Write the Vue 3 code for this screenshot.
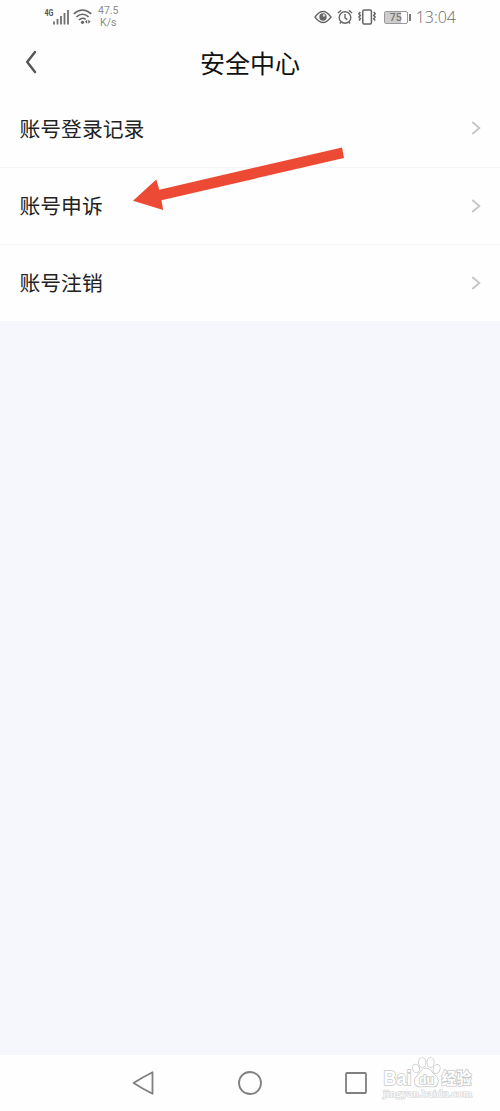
<script setup>
import { ref } from "vue"

const items = ref(["账号登录记录", "账号申诉", "账号注销"])
const battery = ref(75)
</script>

<template>
  <div class="screen">
    <div class="status">
      <svg class="signal" width="27" height="18" viewBox="0 0 27 18">
        <text x="0.5" y="8" class="net" textLength="9" lengthAdjust="spacingAndGlyphs">4G</text>
        <path d="M10 13.5v3M13.5 11v5.500M17 8v8.500M20.500 5v11.500M24 2v14.500" stroke="#707070" stroke-width="1.800" />
      </svg>
      <svg class="wifi" width="20" height="18" viewBox="0 0 20 18">
        <g fill="none" stroke="#666" stroke-width="1.600">
          <path d="M0.800 5.800Q9.500-1.800 18.200 5.800" />
          <path d="M3.400 8.900Q9.500 3.600 15.600 8.900" />
          <path d="M5.900 12Q9.500 8.800 12.700 11.300" />
        </g>
        <circle cx="9.500" cy="14.300" r="1.600" fill="#666" />
        <path d="M14.200 11.800v4l-2.300-2zM15.300 11.800v4l2.300-2z" fill="#666" />
      </svg>
      <div class="speed">
        <span>47.5</span>
        <span>K/s</span>
      </div>
      <div class="status-right">
        <svg class="eye" width="18" height="14" viewBox="0 0 18 14">
          <path d="M1 7Q9-4 17 7Q9 18 1 7z" fill="none" stroke="#666" stroke-width="1.300" />
          <circle cx="9" cy="7" r="3.700" fill="#666" />
          <circle cx="10" cy="5.500" r="1.200" fill="#ddd" />
        </svg>
        <svg class="alarm" width="16" height="16" viewBox="0 0 16 16">
          <g fill="none" stroke="#666" stroke-width="1.400">
            <circle cx="8" cy="8.500" r="5.800" />
            <path d="M0.900 4L4.200 1.200M15.100 4L11.800 1.200M8 5v3.800l2.400 1.800M4.200 13.100l-1.400 1.500M11.800 13.100l1.400 1.500" />
          </g>
        </svg>
        <svg class="vibrate" width="20" height="16" viewBox="0 0 20 16">
          <g fill="none" stroke="#666" stroke-width="1.500">
            <rect x="5.800" y="1" width="8.600" height="14" rx="1.200" />
            <path d="M3.400 3l-1.500 1.700l1.500 1.700l-1.500 1.700l1.500 1.700l-1.500 1.700" />
            <path d="M16.700 3l1.500 1.700l-1.500 1.700l1.500 1.700l-1.500 1.700l1.500 1.700" />
          </g>
        </svg>
        <div class="battery">
          <span class="level" :style="{ width: `${battery}%` }" />
          <span class="percent">{{ battery }}</span>
        </div>
        <span class="cap" />
        <span class="clock">13:04</span>
      </div>
    </div>

    <header>
      <svg class="back" width="14" height="26" viewBox="0 0 14 26">
        <path d="M11 3L3.200 13L11 23" fill="none" stroke="#555" stroke-width="2.400" stroke-linecap="round" stroke-linejoin="round" />
      </svg>
      <h1>安全中心</h1>
    </header>

    <ul>
      <li v-for="item in items" :key="item">
        <span>{{ item }}</span>
        <svg width="12" height="16" viewBox="0 0 12 16">
          <path d="M2.300 2L9.300 8L2.300 14" fill="none" stroke="#c6c6c6" stroke-width="1.900" />
        </svg>
      </li>
    </ul>

    <main />

    <nav>
      <svg width="24" height="28" viewBox="0 0 24 28">
        <path d="M21.500 3.200V24.800Q12 20 2.600 14Q12 8 21.500 3.200z" fill="none" stroke="#808080" stroke-width="1.800" stroke-linejoin="round" />
      </svg>
      <svg width="26" height="28" viewBox="0 0 26 28">
        <circle cx="13" cy="14" r="11" fill="none" stroke="#808080" stroke-width="1.800" />
      </svg>
      <svg width="24" height="28" viewBox="0 0 24 28">
        <rect x="2" y="4" width="20" height="20" rx="1" fill="none" stroke="#808080" stroke-width="1.800" />
      </svg>
    </nav>

    <!-- pointer to the appeal row -->
    <svg class="arrow" width="220" height="70" viewBox="0 0 220 70">
      <path d="M3 60.800L26.300 39.500L29.300 49.700L212 7.500L214 18L31.500 60.300L33.200 70z" fill="#ec4a34" />
    </svg>

    <svg class="watermark" width="100" height="50" viewBox="0 0 100 50">
      <g fill="#fff" stroke="#c9c9c9" stroke-width="1.600" paint-order="stroke">
        <text x="3.500" y="34" class="logo" textLength="28" lengthAdjust="spacingAndGlyphs">Bai</text>
        <ellipse cx="36" cy="17.500" rx="3" ry="4" transform="rotate(-18 36 17.500)" />
        <ellipse cx="42.200" cy="11.500" rx="3.200" ry="4.500" />
        <ellipse cx="50.500" cy="11.500" rx="3.200" ry="4.500" />
        <ellipse cx="56.600" cy="18" rx="3" ry="4.200" transform="rotate(18 56.600 18)" />
        <path d="M46.300 17.500C51 17.500 51.500 22 55 24.500C60 28.500 58 36 52.500 35.500C48 35 45 35 41 35.500C34.500 36 33 29.500 37 25.500C40.500 22.500 41.500 17.500 46.300 17.500z" />
        <text x="39" y="32.500" class="du" textLength="15" lengthAdjust="spacingAndGlyphs">du</text>
        <text x="61.500" y="33" class="exp" textLength="30" lengthAdjust="spacingAndGlyphs">经验</text>
      </g>
      <text x="3" y="46" class="url" textLength="89" lengthAdjust="spacingAndGlyphs">jingyan.baidu.com</text>
    </svg>
  </div>
</template>

<style>
body {
  background: #fff;
}
</style>

<style scoped>
.screen {
  position: relative;
  display: flex;
  flex-direction: column;
  width: 500px;
  height: 1111px;
  overflow: hidden;
  background: #fefefe;
  font-family: "Noto Sans", "Noto Sans CJK SC", sans-serif;
}

.status {
  display: flex;
  align-items: center;
  box-sizing: border-box;
  height: 34px;
  padding: 0 44px;
}

.wifi {
  margin-left: 2px;
}

.net {
  font: bold 8.5px Roboto, sans-serif;
  fill: #555;
}

.speed {
  display: flex;
  flex-direction: column;
  align-items: center;
  margin-left: 5px;
  font: 10.5px/12px Roboto, sans-serif;
  color: #8c8c8c;
}

.status-right {
  display: flex;
  align-items: center;
  margin-left: auto;
}

.alarm {
  margin-left: 5px;
}

.vibrate {
  margin-left: 4px;
}

.battery {
  position: relative;
  box-sizing: border-box;
  width: 24px;
  height: 13px;
  margin-left: 7px;
  border: 1px solid #999;
  border-radius: 2px;
}

.level {
  display: block;
  height: 100%;
  background: #ccc;
}

.percent {
  position: absolute;
  inset: 0;
  font: 500 10.5px/11px Roboto, sans-serif;
  text-align: center;
  color: #777;
}

.cap {
  width: 2px;
  height: 7px;
  margin-left: 1px;
  background: #777;
}

.clock {
  margin-left: 5px;
  font: 300 16px/20px "Open Sans", "Noto Sans", sans-serif;
  color: #6c6c6c;
}

header {
  display: grid;
  grid-template-columns: 50px 1fr 50px;
  align-items: center;
  height: 56px;
}

.back {
  margin-left: 24px;
}

h1 {
  margin: 0;
  padding-bottom: 1px;
  font: 400 25px/36px "Noto Sans CJK SC", sans-serif;
  text-align: center;
  color: #111;
}

ul {
  margin: 0;
  padding: 0;
  list-style: none;
}

li {
  display: flex;
  align-items: center;
  justify-content: space-between;
  box-sizing: border-box;
  height: 77px;
  padding: 0 18px 0 19.5px;
  border-bottom: 1px solid transparent;
  font: 20.8px/30px "Noto Sans CJK SC", sans-serif;
  color: #222;
}

li + li {
  border-top: 1px solid #f5f5f6;
}

li + li span {
  padding-bottom: 1px;
}

main {
  flex: 1;
  background: #f5f7fc;
}

nav {
  display: flex;
  align-items: center;
  justify-content: space-between;
  box-sizing: border-box;
  height: 56px;
  padding: 0 132px 0 131px;
}

.arrow {
  position: absolute;
  left: 130px;
  top: 140px;
}

.watermark {
  position: absolute;
  left: 380px;
  top: 1051px;
}

.logo {
  font: bold 20px "Liberation Sans", sans-serif;
}

.du {
  font: bold 12px "Liberation Sans", sans-serif;
}

.exp {
  font: bold 16px "Noto Sans CJK SC", sans-serif;
}

.url {
  font: 10px "Liberation Serif", serif;
  fill: #fff;
  stroke: #d6d6d6;
  stroke-width: 1.2;
  paint-order: stroke;
}
</style>
